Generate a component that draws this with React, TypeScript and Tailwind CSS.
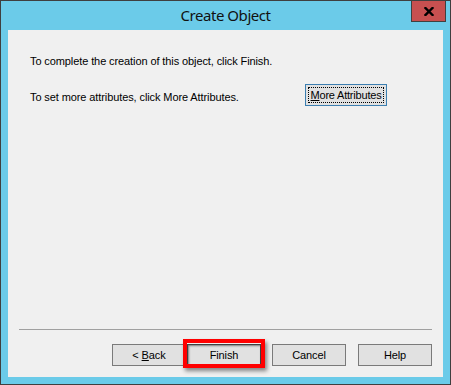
import React from "react";

const ui = { fontFamily: '"Liberation Sans", Arial, sans-serif' };

function Btn({ children, className = "" }: { children: React.ReactNode; className?: string }) {
  return (
    <div
      className={`flex h-[22px] w-[74px] items-center justify-center border border-[#7a7a7a] bg-[#e1e1e1] text-[11px] tracking-[-0.1px] text-black ${className}`}
    >
      {children}
    </div>
  );
}

export default function App() {
  return (
    <div
      className="relative flex h-[385px] w-[451px] flex-col border border-[#3f3f3f] bg-[#6bcbe9]"
      style={ui}
    >
      {/* Title bar */}
      <div className="flex h-[29px] items-center justify-center">
        <span
          className="pb-[1px] text-[15px] tracking-[-0.45px] text-[#111]"
          style={{ fontFamily: '"Noto Sans", "Open Sans", sans-serif' }}
        >
          Create Object
        </span>
      </div>
      <div className="absolute right-[4px] top-[-1px] flex h-[22px] w-[35px] items-center justify-center border border-[#404040] bg-[#c75050]">
        <svg width="10" height="9" viewBox="0 0 10 9">
          <path d="M1.5 1 L8.5 8 M8.5 1 L1.5 8" stroke="#000" strokeWidth="2.4" strokeLinecap="square" />
        </svg>
      </div>

      {/* Client area */}
      <div className="mx-[7px] mb-[7px] flex flex-1 flex-col bg-[#f0f0f0]">
        <div className="flex flex-1 flex-col pl-[22px] pt-[25px]">
          <p className="text-[11px] leading-[13px] tracking-[-0.1px] text-black">
            To complete the creation of this object, click Finish.
          </p>
          <div className="mt-[20px] flex items-center">
            <p className="w-[275px] text-[11px] leading-[13px] tracking-[-0.1px] text-black">
              To set more attributes, click More Attributes.
            </p>
            <div className="-mt-[4px] flex h-[22px] w-[82px] items-center justify-center border border-[#3c7fb1] bg-[#e1e1e1] p-[2px]">
              <div className="flex h-full w-full items-center justify-center border border-dotted border-black text-[11px] tracking-[-0.2px] text-black">
                <span>
                  <span className="underline">M</span>ore Attributes
                </span>
              </div>
            </div>
          </div>
        </div>

        <div className="mx-[11px] h-px bg-[#a0a0a0]" />

        <div className="flex justify-end pb-[11px] pr-[11px] pt-[14px]">
          <Btn>
            <span>
              &lt; <span className="underline">B</span>ack
            </span>
          </Btn>
          <div className="relative ml-[1px]">
            <Btn className="border-[#404040] shadow-[inset_1px_1px_2px_rgba(0,0,0,0.45)]">Finish</Btn>
            <div className="pointer-events-none absolute left-[-4px] right-[-4px] top-[-5px] bottom-[-2px] border-[4px] border-[#ff0000] shadow-[2px_3px_4px_rgba(0,0,0,0.45)]" />
          </div>
          <Btn className="ml-[11px]">Cancel</Btn>
          <Btn className="ml-[12px]">Help</Btn>
        </div>
      </div>
    </div>
  );
}
